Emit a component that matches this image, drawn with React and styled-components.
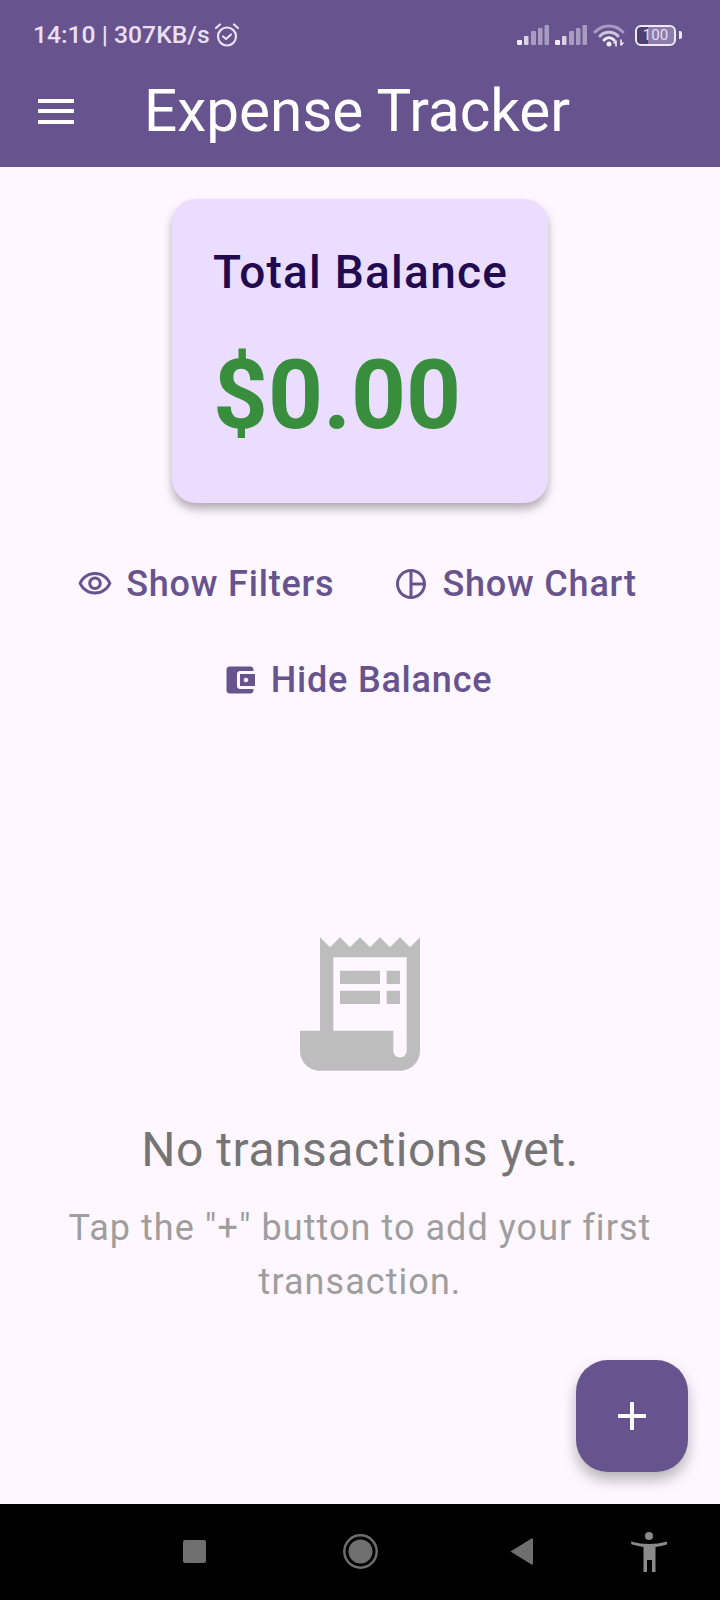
import React from "react";
import styled, { createGlobalStyle } from "styled-components";

// STYLES

const GlobalStyle = createGlobalStyle`
    * { box-sizing: border-box; }
    html, body { margin: 0; padding: 0; background: #fef7ff; }
    body { font-family: Roboto, "Noto Sans", sans-serif; }
`;

const Page = styled.div`
    position: relative;
    width: 720px;
    height: 1600px;
    display: flex;
    flex-direction: column;
    overflow: hidden;
    background-color: #fef7ff;
`;

const Header = styled.header`
    height: 167px;
    flex: none;
    background-color: #67548e;
`;

const StatusBar = styled.div`
    height: 63px;
    padding: 21px 38px 0 33px;
    display: flex;
    align-items: flex-start;
    justify-content: space-between;
    color: #eadff3;
`;

const StatusGroup = styled.div`
    display: flex;
    align-items: center;
    height: 28px;
    gap: ${({ $gap }) => $gap || 0}px;
`;

const StatusText = styled.span`
    font-size: 24.7px;
    font-weight: 500;
    line-height: 28px;
`;

const Battery = styled.div`
    width: 41px;
    height: 21px;
    border: 2.5px solid #f0e8f6;
    border-radius: 6px;
    display: flex;
    align-items: center;
    justify-content: center;
    font-size: 15px;
    line-height: 1;
    color: #eadff3;
    background: linear-gradient(to right, #4d4170 0 30%, #8a7cab 30% 100%);
`;

const BatteryTip = styled.div`
    width: 3px;
    height: 8px;
    margin-left: 3px;
    border-radius: 0 2px 2px 0;
    background-color: #f0e8f6;
`;

const BatteryWrap = styled.div`
    display: flex;
    align-items: center;
    margin-left: 4px;
`;

const Toolbar = styled.div`
    height: 96px;
    display: flex;
    align-items: center;
    padding-left: 38px;
`;

const MenuBars = styled.div`
    width: 36px;
    height: 25px;
    display: flex;
    flex-direction: column;
    justify-content: space-between;

    span {
        display: block;
        height: 4px;
        background-color: #fff;
    }
`;

const Title = styled.h1`
    margin: 0 0 0 70px;
    font-size: 58.4px;
    font-weight: 400;
    line-height: 70px;
    color: #fff;
`;

const Main = styled.main`
    flex: 1;
    display: flex;
    flex-direction: column;
    align-items: center;
`;

const BalanceCard = styled.section`
    width: 376px;
    height: 304px;
    margin-top: 32px;
    padding: 46px 41px 0;
    display: flex;
    flex-direction: column;
    background-color: #eaddff;
    border-radius: 24px;
    box-shadow: 0 6px 10px rgba(0, 0, 0, 0.3);
`;

const BalanceLabel = styled.div`
    font-size: 46px;
    font-weight: 500;
    line-height: 54px;
    letter-spacing: 1.25px;
    color: #210a50;
    white-space: nowrap;
    text-align: center;
`;

const BalanceAmount = styled.div`
    margin-top: 40px;
    font-size: 96px;
    font-weight: 700;
    line-height: 112px;
    color: #388e3c;
`;

const ActionRow = styled.div`
    display: flex;
    justify-content: center;
    gap: ${({ $gap }) => $gap || 0}px;
    margin-top: ${({ $top }) => $top}px;
    padding-right: 6px;
`;

const ActionButton = styled.button`
    display: flex;
    align-items: center;
    gap: 13px;
    padding: 0;
    height: 48px;
    border: 0;
    background: none;
    font-family: inherit;
    font-size: 36px;
    font-weight: 500;
    letter-spacing: 0.8px;
    color: #67548e;
    white-space: nowrap;

    svg {
        width: 36px;
        height: 36px;
        fill: #67548e;
        flex: none;
    }
`;

const EmptyState = styled.div`
    margin-top: 220px;
    display: flex;
    flex-direction: column;
    align-items: center;
    text-align: center;
`;

const EmptyIcon = styled.svg`
    width: 160px;
    height: 160px;
    fill: #bdbdbd;
`;

const EmptyTitle = styled.div`
    margin-top: 38px;
    font-size: 48px;
    font-weight: 400;
    line-height: 56px;
    letter-spacing: 0.5px;
    color: #757575;
`;

const EmptyHint = styled.div`
    margin-top: 23px;
    width: 620px;
    font-size: 36px;
    line-height: 54px;
    letter-spacing: 1.05px;
    color: #9e9e9e;
`;

const Fab = styled.button`
    position: absolute;
    left: 576px;
    top: 1360px;
    width: 112px;
    height: 112px;
    border: 0;
    padding: 0;
    border-radius: 32px;
    display: flex;
    align-items: center;
    justify-content: center;
    background-color: #67548e;
    box-shadow: 0 8px 14px rgba(0, 0, 0, 0.28);

    svg {
        width: 48px;
        height: 48px;
        fill: #fff;
    }
`;

const NavBar = styled.nav`
    height: 96px;
    flex: none;
    display: flex;
    align-items: center;
    padding-left: 183px;
    background-color: #000;
`;

const NavIcon = styled.svg`
    flex: none;
    width: ${({ $w }) => $w}px;
    height: 40px;
    margin-left: ${({ $left }) => $left || 0}px;
    fill: ${({ $tone }) => $tone || "#6f6f6f"};
`;

// ICONS

const Signal = () => (
    <svg width="32" height="20" viewBox="0 0 32 20" fill="#a89cc2">
        <rect x="0" y="15" width="5" height="5" rx="1" fill="#f2edf7" />
        <rect x="7" y="11" width="4.5" height="9" rx="1" fill="#d9d0e6" />
        <rect x="14" y="6" width="5" height="14" rx="1" />
        <rect x="21" y="3" width="4.5" height="17" rx="1" />
        <rect x="27.5" y="0" width="4.5" height="20" rx="1" />
    </svg>
);

const Wifi = () => (
    <svg width="32" height="24" viewBox="0 0 32 24" fill="none" strokeLinecap="round">
        <path d="M2 9C10 1 22 1 30 9" stroke="#a89cc2" strokeWidth="3" />
        <path d="M7 13c5-5 13-5 18 0" stroke="#cfc5de" strokeWidth="3" />
        <path d="M11 17c3-3 7-3 10 0" stroke="#f2edf7" strokeWidth="3" />
        <circle cx="16" cy="21" r="2.5" fill="#f2edf7" />
        <path d="M23 23v-5m-2 2 2-2M28 17v5m2-2-2 2" stroke="#f2edf7" strokeWidth="1.6" />
    </svg>
);

const Alarm = () => (
    <svg width="26" height="26" viewBox="0 0 26 26" fill="none" stroke="#eadff3" strokeWidth="2.2" strokeLinecap="round" strokeLinejoin="round">
        <circle cx="13" cy="14.5" r="9" />
        <path d="M9 14.5l3 2.5 5-4.5" />
        <path d="M2 6l4-3.5M24 6l-4-3.5" />
    </svg>
);

// HTML

const App = () => (
    <Page>
        <GlobalStyle />
        <Header>
            <StatusBar>
                <StatusGroup $gap={4}>
                    <StatusText>14:10 | 307KB/s</StatusText>
                    <Alarm />
                </StatusGroup>
                <StatusGroup $gap={6}>
                    <Signal />
                    <Signal />
                    <Wifi />
                    <BatteryWrap>
                        <Battery>100</Battery>
                        <BatteryTip />
                    </BatteryWrap>
                </StatusGroup>
            </StatusBar>
            <Toolbar>
                <MenuBars>
                    <span />
                    <span />
                    <span />
                </MenuBars>
                <Title>Expense Tracker</Title>
            </Toolbar>
        </Header>
        <Main>
            <BalanceCard>
                <BalanceLabel>Total Balance</BalanceLabel>
                <BalanceAmount>$0.00</BalanceAmount>
            </BalanceCard>
            <ActionRow $top={57} $gap={59}>
                <ActionButton>
                    <svg viewBox="0 0 24 24">
                        <path d="M12 6c3.79 0 7.17 2.13 8.82 5.5C19.17 14.87 15.79 17 12 17s-7.17-2.13-8.82-5.5C4.83 8.13 8.21 6 12 6m0-2C7 4 2.73 7.11 1 11.5 2.73 15.89 7 19 12 19s9.27-3.11 11-7.5C21.27 7.11 17 4 12 4zm0 5c1.38 0 2.5 1.12 2.5 2.5S13.38 14 12 14s-2.5-1.12-2.5-2.5S10.62 9 12 9m0-2c-2.48 0-4.5 2.02-4.5 4.5S9.52 16 12 16s4.5-2.02 4.5-4.5S14.48 7 12 7z" />
                    </svg>
                    Show Filters
                </ActionButton>
                <ActionButton>
                    <svg viewBox="0 0 24 24">
                        <path d="M12 2C6.49 2 2 6.49 2 12s4.49 10 10 10 10-4.49 10-10S17.51 2 12 2zm7.93 9H13V4.07c3.61.45 6.48 3.32 6.93 6.93zM4 12c0-4.07 3.06-7.44 7-7.93v15.86c-3.94-.49-7-3.86-7-7.93zm9 7.93V13h6.93c-.45 3.61-3.32 6.48-6.93 6.93z" />
                    </svg>
                    Show Chart
                </ActionButton>
            </ActionRow>
            <ActionRow $top={48}>
                <ActionButton>
                    <svg viewBox="0 0 24 24">
                        <path d="M21 18v1c0 1.1-.9 2-2 2H5c-1.11 0-2-.9-2-2V5c0-1.1.89-2 2-2h14c1.1 0 2 .9 2 2v1h-9c-1.11 0-2 .9-2 2v8c0 1.1.89 2 2 2h9zm-9-2h10V8H12v8zm4-2.5c-.83 0-1.5-.67-1.5-1.5s.67-1.5 1.5-1.5 1.5.67 1.5 1.5-.67 1.5-1.5 1.5z" />
                    </svg>
                    Hide Balance
                </ActionButton>
            </ActionRow>
            <EmptyState>
                <EmptyIcon viewBox="0 0 24 24">
                    <path d="M19.5 3.5 18 2l-1.5 1.5L15 2l-1.5 1.5L12 2l-1.5 1.5L9 2 7.5 3.5 6 2v14H3v3c0 1.66 1.34 3 3 3h12c1.66 0 3-1.34 3-3V2l-1.5 1.5zM19 19c0 .55-.45 1-1 1s-1-.45-1-1v-3H8V5h11v14z" />
                    <path d="M9 7h6v2H9zm7 0h2v2h-2zm-7 3h6v2H9zm7 0h2v2h-2z" />
                </EmptyIcon>
                <EmptyTitle>No transactions yet.</EmptyTitle>
                <EmptyHint>Tap the "+" button to add your first transaction.</EmptyHint>
            </EmptyState>
        </Main>
        <Fab>
            <svg viewBox="0 0 24 24">
                <path d="M19 13h-6v6h-2v-6H5v-2h6V5h2v6h6v2z" />
            </svg>
        </Fab>
        <NavBar>
            <NavIcon $w={23} viewBox="0 0 23 40">
                <rect x="0" y="8" width="23" height="23" rx="2" />
            </NavIcon>
            <NavIcon $w={35} $left={137} viewBox="0 0 35 40">
                <circle cx="17.5" cy="19.5" r="16.2" fill="none" stroke="#6f6f6f" strokeWidth="2.4" />
                <circle cx="17.5" cy="19.5" r="12" />
            </NavIcon>
            <NavIcon $w={23} $left={132} viewBox="0 0 23 40">
                <path d="M0.5 19.5 21.5 6.5q1.5-.5 1.5 1v24q0 1.5-1.5 1z" />
            </NavIcon>
            <NavIcon $w={36} $left={98} $tone="#8a8a8a" viewBox="0 0 36 40">
                <circle cx="18" cy="4" r="4" />
                <path d="M0 9.5q9 2.5 18 2.5t18-2.5l.3 2.8Q31 14 24.5 15v25h-3.500V28h-5v12h-3.500V15Q6 14 .3 12.3z" />
            </NavIcon>
        </NavBar>
    </Page>
);

export default App;
